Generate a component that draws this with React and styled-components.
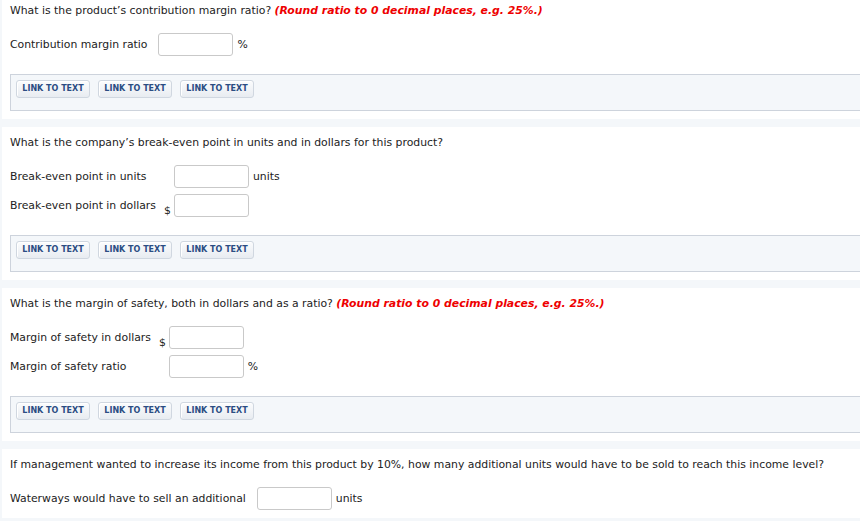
import React from "react";
import styled, { createGlobalStyle } from "styled-components";

const Global = createGlobalStyle`
  html, body { margin: 0; padding: 0; }
  body {
    background: #f4f7fa;
    font-family: "DejaVu Sans", Verdana, sans-serif;
    font-size: 10.85px;
    color: #222;
    overflow: hidden;
  }
`;

const Page = styled.div`
  display: flex;
  flex-direction: column;
  gap: 8px;
  padding-left: 2px;
`;

const Section = styled.section`
  background: #fff;
  padding: ${(p) => (p.$first ? "3px" : "8px")} 0 8px 8px;
`;

const Question = styled.p`
  margin: 0;
  line-height: 16px;
`;

const Hint = styled.span`
  color: #ee0000;
  font-weight: bold;
  font-style: italic;
`;

const Rows = styled.div`
  display: grid;
  grid-template-columns: max-content max-content max-content max-content;
  justify-content: start;
  align-items: center;
  row-gap: 6px;
  margin-top: 14px;
`;

const Label = styled.span`
  padding-right: 8px;
  line-height: 16px;
`;

const Prefix = styled.span`
  align-self: end;
  padding-right: 3px;
  line-height: 12px;
  min-height: 1px;
`;

const Input = styled.input`
  box-sizing: border-box;
  width: 75px;
  height: 23px;
  border: 1px solid #c9c9c9;
  border-radius: 3px;
  background: #fff;
  padding: 2px 4px;
  font: inherit;
`;

const Suffix = styled.span`
  padding-left: 4px;
  line-height: 16px;
`;

const LinkBox = styled.div`
  display: flex;
  gap: 8px;
  margin-top: 18px;
  padding: 5px 5px 12px;
  background: #f4f7fa;
  border: 1px solid #cdd3dc;
  border-right: none;
`;

const LinkButton = styled.button`
  box-sizing: border-box;
  width: 74px;
  height: 18px;
  padding: 0;
  border: 1px solid #d0d7e0;
  border-radius: 3px;
  background: linear-gradient(#fbfcfd, #e8ecf1);
  box-shadow: inset 1px 1px 0 #fff;
  color: #2b4d83;
  font-family: "DejaVu Sans", Verdana, sans-serif;
  font-size: 8px;
  font-weight: bold;
  text-transform: uppercase;
  line-height: 16px;
  cursor: pointer;
`;

const Links = () => (
  <LinkBox>
    <LinkButton>Link to Text</LinkButton>
    <LinkButton>Link to Text</LinkButton>
    <LinkButton>Link to Text</LinkButton>
  </LinkBox>
);

const Row = ({ label, prefix, suffix }) => (
  <>
    <Label>{label}</Label>
    <Prefix>{prefix || ""}</Prefix>
    <Input type="text" />
    <Suffix>{suffix || ""}</Suffix>
  </>
);

export default function App() {
  return (
    <>
      <Global />
      <Page>
        <Section $first>
          <Question>
            What is the product’s contribution margin ratio?{" "}
            <Hint>(Round ratio to 0 decimal places, e.g. 25%.)</Hint>
          </Question>
          <Rows>
            <Row label="Contribution margin ratio" suffix="%" />
          </Rows>
          <Links />
        </Section>
        <Section>
          <Question>
            What is the company’s break-even point in units and in dollars for this product?
          </Question>
          <Rows>
            <Row label="Break-even point in units" suffix="units" />
            <Row label="Break-even point in dollars" prefix="$" />
          </Rows>
          <Links />
        </Section>
        <Section>
          <Question>
            What is the margin of safety, both in dollars and as a ratio?{" "}
            <Hint>(Round ratio to 0 decimal places, e.g. 25%.)</Hint>
          </Question>
          <Rows>
            <Row label="Margin of safety in dollars" prefix="$" />
            <Row label="Margin of safety ratio" suffix="%" />
          </Rows>
          <Links />
        </Section>
        <Section>
          <Question>
            If management wanted to increase its income from this product by 10%, how many
            additional units would have to be sold to reach this income level?
          </Question>
          <Rows>
            <Row label="Waterways would have to sell an additional" suffix="units" />
          </Rows>
        </Section>
      </Page>
    </>
  );
}
